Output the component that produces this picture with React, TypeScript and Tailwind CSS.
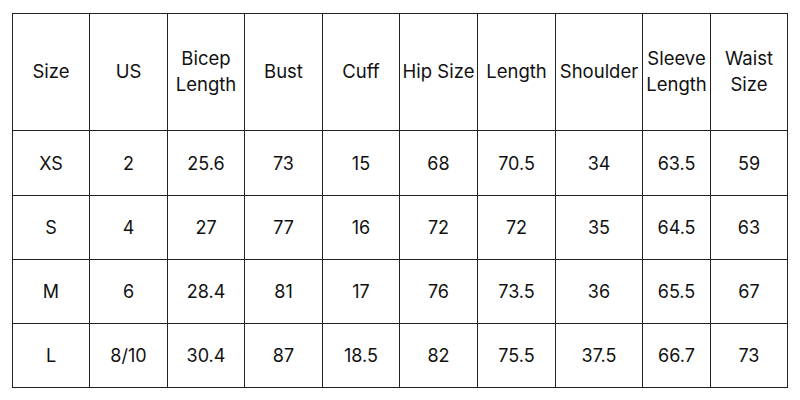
const colW = [
  "w-[77px]",
  "w-[78px]",
  "w-[77px]",
  "w-[78px]",
  "w-[77px]",
  "w-[78px]",
  "w-[78px]",
  "w-[87px]",
  "w-[68px]",
  "w-[77px]",
];
const headers: string[][] = [
  ["Size"],
  ["US"],
  ["Bicep", "Length"],
  ["Bust"],
  ["Cuff"],
  ["Hip Size"],
  ["Length"],
  ["Shoulder"],
  ["Sleeve", "Length"],
  ["Waist", "Size"],
];
const rows: string[][] = [
  ["XS", "2", "25.6", "73", "15", "68", "70.5", "34", "63.5", "59"],
  ["S", "4", "27", "77", "16", "72", "72", "35", "64.5", "63"],
  ["M", "6", "28.4", "81", "17", "76", "73.5", "36", "65.5", "67"],
  ["L", "8/10", "30.4", "87", "18.5", "82", "75.5", "37.5", "66.7", "73"],
];
const rowH = ["h-[65px]", "h-[64px]", "h-[64px]", "h-[64px]"];

export default function App() {
  return (
    <div className="w-[800px] h-[400px] bg-white pt-[13px] pl-[12px] font-['Inter',sans-serif]">
      <div className="border-l border-t border-[#222] w-fit text-[#111]">
        <div className="flex h-[117px]">
          {headers.map((h, i) => (
            <div
              key={i}
              className={`${colW[i]} flex flex-col items-center justify-center pb-[2px] border-r border-b border-[#222] text-[18.5px] leading-[26px]`}
            >
              {h.map((l, j) => (
                <span key={j} className="whitespace-nowrap">{l}</span>
              ))}
            </div>
          ))}
        </div>
        {rows.map((r, ri) => (
          <div key={ri} className={`${rowH[ri]} flex`}>
            {r.map((c, i) => (
              <div
                key={i}
                className={`${colW[i]} flex items-center justify-center border-r border-b border-[#222] text-[18px]`}
              >
                {c}
              </div>
            ))}
          </div>
        ))}
      </div>
    </div>
  );
}
